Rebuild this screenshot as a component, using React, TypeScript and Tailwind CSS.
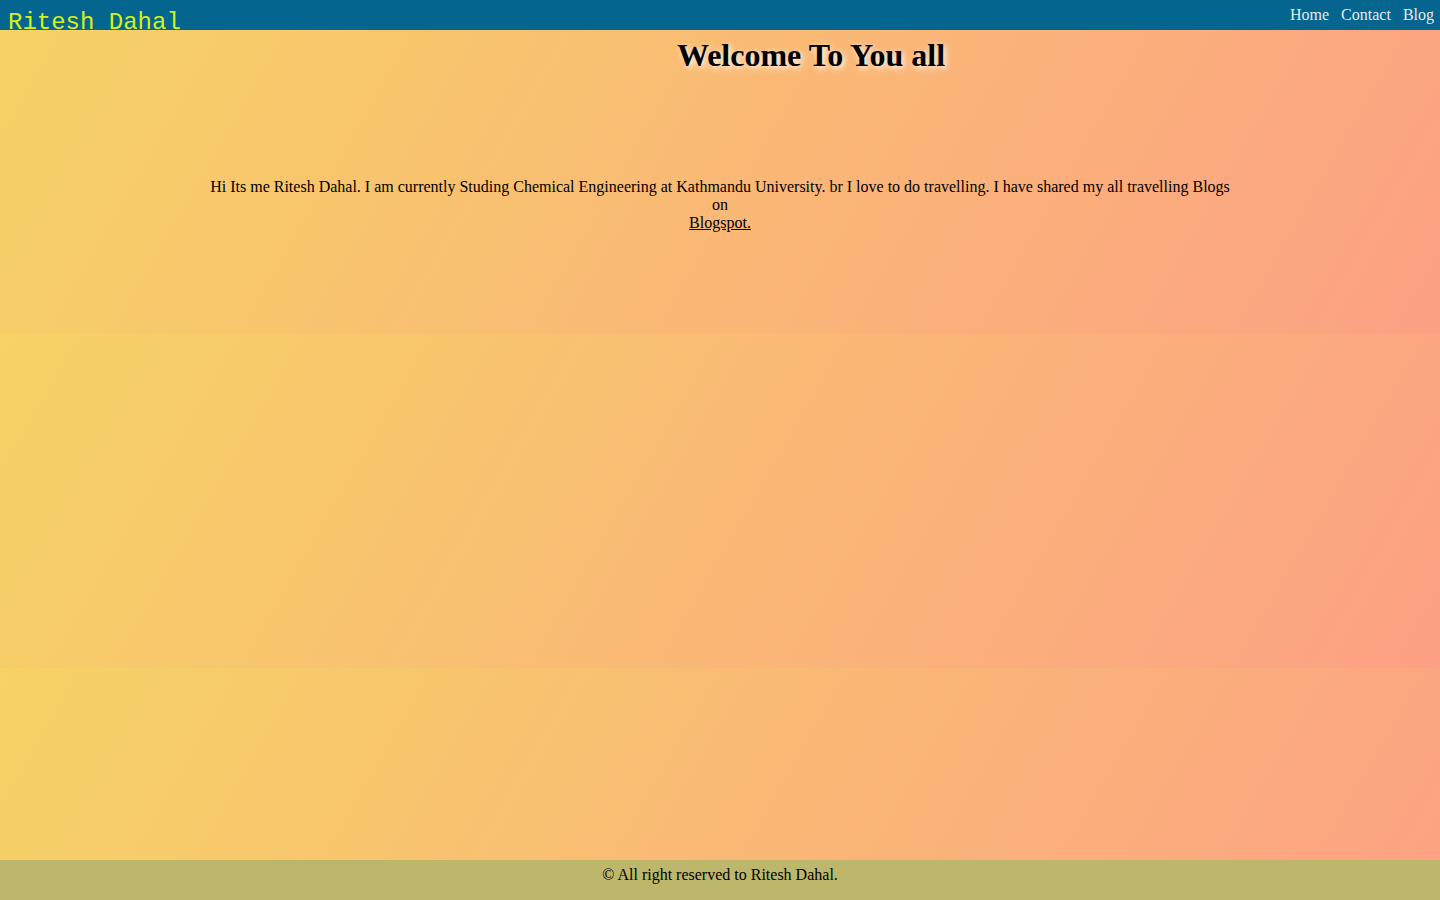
export default function App() {
  return (
    <div className="flex h-screen flex-col bg-[linear-gradient(120deg,#f6d365_0%,#fda085_100%)] bg-[length:100%_334px] bg-repeat font-['Liberation_Serif',serif] text-black">
      <header className="flex h-[30px] items-start justify-between bg-[#04658f]">
        <div className="pl-2 pt-[9px] font-['Liberation_Mono',monospace] text-[24px] leading-[28px] whitespace-nowrap text-[#d6f20f]">
          Ritesh Dahal
        </div>
        <nav className="flex gap-3 pr-[6px] pt-[6px] text-[16px] leading-[18px] text-[#e3ecf3]">
          <a href="#">Home</a>
          <a href="#">Contact</a>
          <a href="#">Blog</a>
        </nav>
      </header>

      <main className="flex-1">
        <h1 className="mt-[7px] pl-[182px] text-center text-[32px] font-bold leading-[37px] [text-shadow:2px_2px_6px_#fff]">
          Welcome To You all
        </h1>
        <p className="mx-auto mt-[104px] w-[1030px] text-center text-[16px] leading-[18px]">
          Hi Its me Ritesh Dahal. I am currently Studing Chemical Engineering at Kathmandu University. br I love to do
          travelling. I have shared my all travelling Blogs on
          <br />
          <a href="#" className="underline">
            Blogspot.
          </a>
        </p>
      </main>

      <footer className="h-[40px] bg-[#bdb76b] pt-[6px] text-center text-[16px] leading-[18px]">
        © All right reserved to Ritesh Dahal.
      </footer>
    </div>
  );
}
